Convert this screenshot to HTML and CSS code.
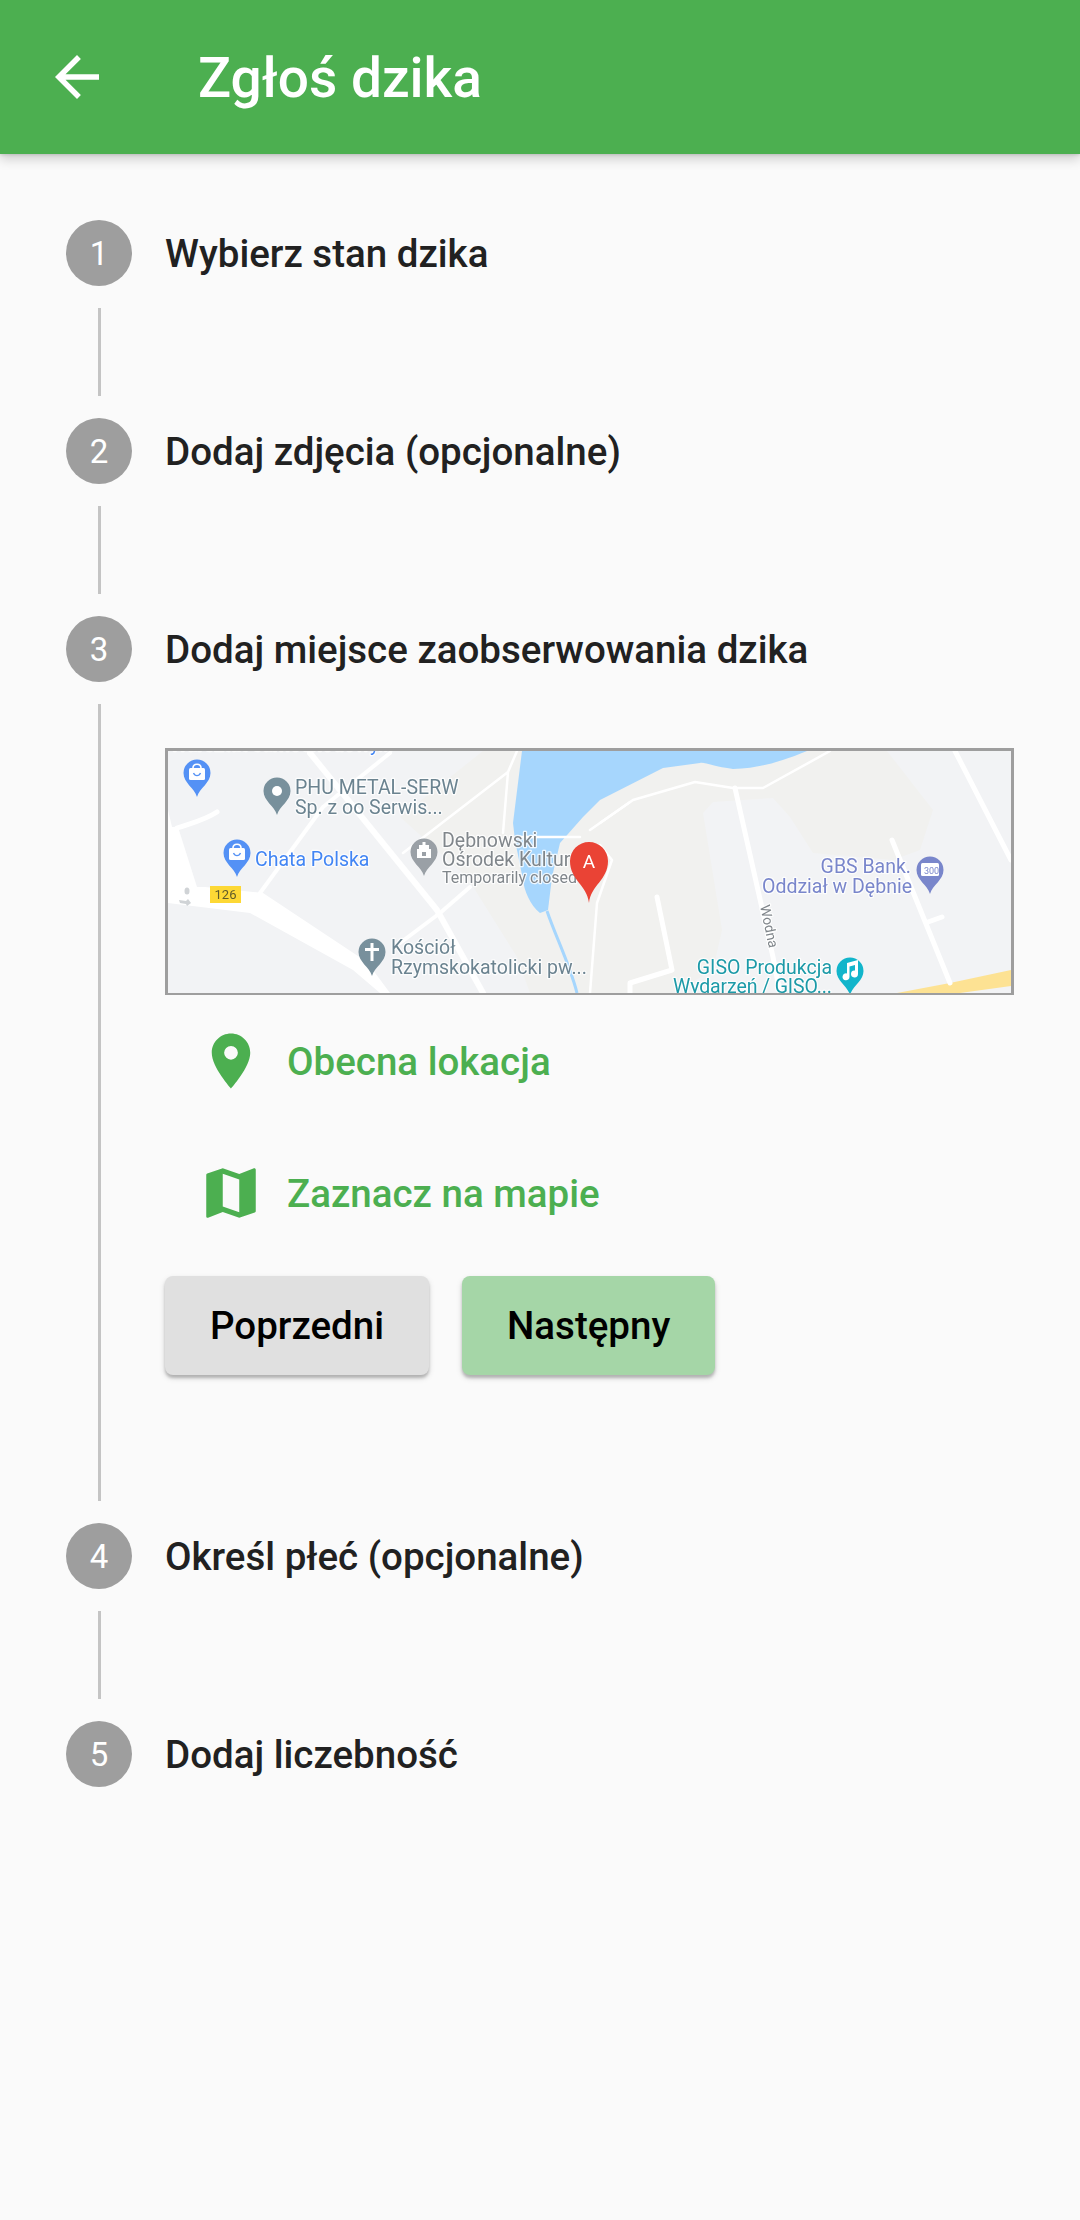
FILE: index.html
```html
<!DOCTYPE html>
<html lang="pl">
<head>
<meta charset="utf-8">
<title>Zgłoś dzika</title>
<link rel="stylesheet" href="styles.css">
</head>
<body>
<header class="appbar">
  <svg class="back" viewBox="0 0 24 24"><path d="M20 11H7.83l5.59-5.59L12 4l-8 8 8 8 1.41-1.41L7.83 13H20v-2z"/></svg>
  <h1 class="title">Zgłoś dzika</h1>
</header>
<main class="stepper">
  <section class="step">
    <div class="head"><span class="num">1</span><h2 class="label">Wybierz stan dzika</h2></div>
    <div class="line"></div>
  </section>
  <section class="step">
    <div class="head"><span class="num">2</span><h2 class="label">Dodaj zdjęcia (opcjonalne)</h2></div>
    <div class="line"></div>
  </section>
  <section class="step">
    <div class="head"><span class="num">3</span><h2 class="label">Dodaj miejsce zaobserwowania dzika</h2></div>
    <div class="line line-open">
      <div class="map">
        <svg class="map-svg" viewBox="168 751 843 242">
          <defs>
            <path id="pin" d="M0 24C-2.5 15-13.5 10-13.5 0A13.5 13.5 0 1 1 13.5 0C13.5 10 2.5 15 0 24Z"/>
            <g id="bag">
              <rect x="-8" y="-5" width="16" height="12" rx="1.5" fill="#fff"/>
              <path d="M-4-5C-4-10 4-10 4-5" fill="none" stroke="#fff" stroke-width="1.6"/>
              <path d="M-3.5 0C-2 3.5 2 3.5 3.5 0" fill="none" stroke="#5491f5" stroke-width="1.4"/>
            </g>
          </defs>
          <rect class="m-bg" x="168" y="751" width="843" height="242"/>
          <path class="m-warm" d="M483 751H887L933 810L920 850L893 860L813 853L790 817L773 798L713 802L703 813L722 930L713 970L673 993H530L517 957L467 877L400 817Z"/>
          <path class="m-water" d="M522 751H807C780 762 760 768 733 769C715 767 705 762 700 763L663 768L600 800L583 817L560 843L552 877L548 910L540 913C530 905 524 890 523 880L515 840L513 823Z"/>
          <path class="m-river" d="M547 911C555 935 570 965 577 993"/>
          <path class="m-yellow" d="M897 993L950 983L1011 970V986L960 993Z"/>

          <path class="r r3" d="M508 772L517 751M403 853L508 772L503 833M517 837H580M590 830L630 802"/>
          <path class="r r3" d="M600 823L633 800L695 782L733 788L763 788L830 751"/>
          <path class="r r3" d="M590 993L597 903L612 860L600 845"/>
          <path class="r r4" d="M260 893L323 807L390 753M400 943L440 913L470 887"/>
          <path class="r r6" d="M310 753L437 910L483 993"/>
          <path class="r r5" d="M177 828C195 822 205 820 217 812"/>
          <path class="r r5" d="M735 788L773 957L780 993M892 840L950 983M928 922L942 917M955 751L1011 860M657 897L672 970L630 983V993"/>
          <path class="m-road" d="M168 887H205L263 893L367 962L390 993H380L353 970L250 913L168 903Z"/>
          <path class="m-road" d="M168 810L172 827H178L197 887H168Z"/>
          <ellipse class="m-mark" cx="187" cy="891" rx="2.500" ry="3.500"/>
          <path class="m-mark" d="M179 900L186 901L188 899L191 903L187 906L186 904L180 903Z"/>

          <text class="t t-blue" x="170" y="751">Warsztat samochodowy...</text>
          <use href="#pin" class="p-blue" x="197" y="773"/><use href="#bag" x="197" y="773"/>
          <use href="#pin" class="p-slate" x="277" y="791"/><circle class="dot" cx="277" cy="791" r="5"/>
          <text class="t t-slate" x="295" y="794">PHU METAL-SERW</text>
          <text class="t t-slate" x="295" y="814">Sp. z oo Serwis...</text>
          <use href="#pin" class="p-blue" x="237" y="853"/><use href="#bag" x="237" y="853"/>
          <text class="t t-blue" x="255" y="866">Chata Polska</text>
          <rect class="shield" x="210" y="886" width="31" height="17"/>
          <text class="t-shield" x="225.500" y="899">126</text>
          <use href="#pin" class="p-gray" x="424" y="852"/>
          <path class="dot" d="M417 849H419V845H422.500V842H425.500V845H429V849H431V858H417ZM422 852V856H426V852Z"/>
          <text class="t t-gray" x="442" y="847">Dębnowski</text>
          <text class="t t-gray" x="442" y="866">Ośrodek Kultur</text>
          <text class="t t-gray-s" x="442" y="883">Temporarily closed</text>
          <use href="#pin" class="p-slate" x="372" y="952"/><path class="dot" d="M370.500 943H373.500V948H379V951H373.500V961H370.500V951H365V948H370.500Z"/>
          <text class="t t-slate" x="391" y="954">Kościół</text>
          <text class="t t-slate" x="391" y="974">Rzymskokatolicki pw...</text>
          <path class="p-red" d="M589 903C587 885 570 880 570 861A19 19 0 1 1 608 861C608 880 591 885 589 903Z"/>
          <text class="t-a" x="589" y="868">A</text>
          <text class="t t-indigo t-end" x="911" y="873">GBS Bank.</text>
          <text class="t t-indigo t-end" x="912" y="893">Oddział w Dębnie</text>
          <use href="#pin" class="p-indigo" x="930" y="870"/>
          <rect class="dot" x="921" y="863" width="18" height="13" rx="1.500"/>
          <text class="t-300" x="931.500" y="874">300</text>
          <text class="t t-road" transform="translate(760 906) rotate(78)">Wodna</text>
          <text class="t t-teal t-end" x="832" y="974">GISO Produkcja</text>
          <text class="t t-teal t-end" x="832" y="993" textLength="159">Wydarzeń / GISO...</text>
          <use href="#pin" class="p-teal" x="850" y="971"/>
          <path class="dot" d="M847 963L858 960V974A3.500 3.500 0 1 1 855 970.500V965L849.500 966.500V977A3.500 3.500 0 1 1 847 973.500Z"/>
        </svg>
      </div>
      <button class="action" type="button">
        <svg class="action-icon" viewBox="0 0 24 24"><path d="M12 2C8.13 2 5 5.13 5 9c0 5.25 7 13 7 13s7-7.750 7-13c0-3.870-3.130-7-7-7zm0 9.500a2.500 2.500 0 0 1 0-5 2.500 2.500 0 0 1 0 5z"/></svg>
        <span>Obecna lokacja</span>
      </button>
      <button class="action" type="button">
        <svg class="action-icon" viewBox="0 0 24 24"><path d="M20.500 3l-.16.030L15 5.100 9 3 3.360 4.900c-.21.070-.36.250-.36.480V20.500c0 .28.220.5.500.5l.16-.030L9 18.900l6 2.100 5.640-1.900c.21-.07.360-.25.360-.48V3.500c0-.28-.22-.5-.5-.5zM15 19l-6-2.110V5l6 2.110V19z"/></svg>
        <span>Zaznacz na mapie</span>
      </button>
      <div class="buttons">
        <button class="btn btn-prev" type="button">Poprzedni</button>
        <button class="btn btn-next" type="button">Następny</button>
      </div>
    </div>
  </section>
  <section class="step">
    <div class="head"><span class="num">4</span><h2 class="label">Określ płeć (opcjonalne)</h2></div>
    <div class="line"></div>
  </section>
  <section class="step">
    <div class="head"><span class="num">5</span><h2 class="label">Dodaj liczebność</h2></div>
  </section>
</main>
</body>
</html>
```
FILE: styles.css
```css
* { box-sizing: border-box; }
html, body { margin: 0; padding: 0; }
body {
  width: 1080px;
  height: 2220px;
  overflow: hidden;
  background: #fafafa;
  font-family: Roboto, "Liberation Sans", sans-serif;
}
.appbar {
  position: relative;
  z-index: 1;
  display: flex;
  align-items: center;
  height: 154px;
  padding-left: 44px;
  background: #4caf50;
  box-shadow: 0 5px 11px rgba(0, 0, 0, .18), 0 1px 3px rgba(0, 0, 0, .12);
}
.back { width: 66px; height: 66px; fill: #fff; flex: none; }
.title {
  margin: 2px 0 0 88px;
  font-size: 55px;
  font-weight: 500;
  color: #fff;
}
.stepper { padding-top: 66px; }
.head {
  display: flex;
  align-items: center;
  gap: 33px;
  height: 66px;
  padding-left: 66px;
}
.num {
  display: flex;
  align-items: center;
  justify-content: center;
  width: 66px;
  height: 66px;
  flex: none;
  border-radius: 50%;
  background: #9e9e9e;
  color: #fff;
  font-size: 33px;
}
.label {
  margin: 0;
  font-size: 38.500px;
  font-weight: 500;
  color: #212121;
}
.line {
  height: 88px;
  margin: 22px 0 22px 98px;
  border-left: 3px solid #c4c4c4;
}
.line-open {
  display: flex;
  flex-direction: column;
  align-items: flex-start;
  height: 797px;
  padding: 44px 0 0 64px;
}
.map {
  width: 849px;
  height: 247px;
  flex: none;
  overflow: hidden;
  border: 3px solid #9e9e9e;
  border-bottom-width: 2px;
  background: #f2f3f5;
}
.map-svg { display: block; width: 843px; height: 242px; filter: blur(.6px); }
.m-bg { fill: #f2f3f5; }
.m-warm { fill: #f1f1ef; }
.m-water { fill: #a6d6fd; }
.m-river { fill: none; stroke: #a6d6fd; stroke-width: 3; }
.m-yellow { fill: #fde293; }
.m-road { fill: #fff; }
.m-mark { fill: #d0d3d6; }
.r { fill: none; stroke: #fff; stroke-linecap: round; stroke-linejoin: round; }
.r3 { stroke-width: 2.500px; }
.r4 { stroke-width: 4px; }
.r5 { stroke-width: 5px; }
.r6 { stroke-width: 6px; }
.t {
  font-family: Roboto, sans-serif;
  font-size: 19.500px;
  paint-order: stroke;
  stroke: #fff;
  stroke-width: 2.500px;
  stroke-linejoin: round;
  stroke-opacity: .8;
}
.t-end { text-anchor: end; }
.t-blue { fill: #4285f4; }
.t-slate { fill: #6b8390; }
.t-gray { fill: #80868b; }
.t-gray-s { fill: #80868b; font-size: 16px; }
.t-indigo { fill: #7986cb; }
.t-teal { fill: #1c9aa8; }
.t-road { fill: #80868b; font-size: 14px; }
.p-blue { fill: #5491f5; }
.p-slate { fill: #78909c; }
.p-gray { fill: #9aa0a6; }
.p-indigo { fill: #7986cb; }
.p-teal { fill: #12b5cb; }
.p-red { fill: #ea4335; }
.dot { fill: #fff; }
.shield { fill: #fdd835; }
.t-shield {
  font-family: Roboto, sans-serif;
  font-size: 13px;
  fill: #5f5a2a;
  text-anchor: middle;
}
.t-a {
  font-family: Roboto, sans-serif;
  font-size: 19px;
  fill: #fff;
  text-anchor: middle;
}
.t-300 {
  font-family: Roboto, sans-serif;
  font-size: 9px;
  fill: #7986cb;
  text-anchor: middle;
}
.action {
  display: flex;
  align-items: center;
  gap: 23px;
  width: 100%;
  height: 132px;
  flex: none;
  padding: 0 0 0 33px;
  border: 0;
  background: none;
  color: #4caf50;
  font-family: inherit;
  font-size: 38.500px;
  font-weight: 500;
}
.action-icon { width: 66px; height: 66px; fill: #4caf50; flex: none; }
.buttons { display: flex; gap: 33px; margin-top: 17px; }
.btn {
  height: 99px;
  padding: 0 45px;
  border: 0;
  border-radius: 8px;
  color: #000;
  font-family: inherit;
  font-size: 38.500px;
  font-weight: 500;
  box-shadow: 0 3px 3px rgba(0, 0, 0, .2), 0 3px 6px rgba(0, 0, 0, .14);
}
.btn-prev { background: #e0e0e0; }
.btn-next { background: #a5d6a7; }
```
